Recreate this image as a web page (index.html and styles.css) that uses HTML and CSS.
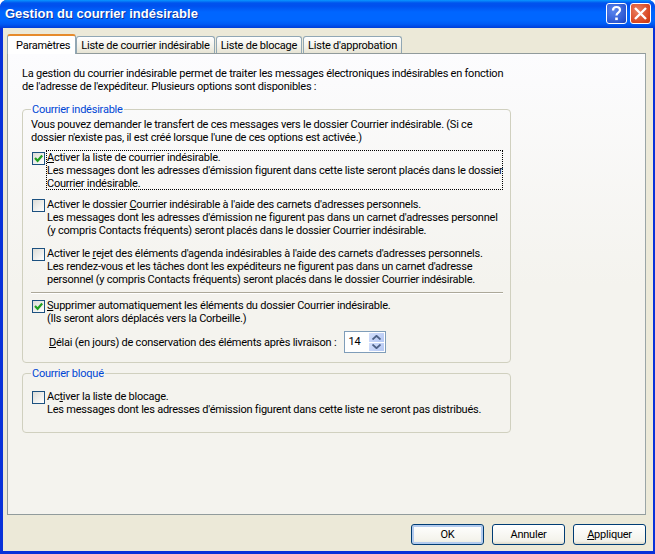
FILE: index.html
```html
<!DOCTYPE html>
<html lang="fr">
<head>
<meta charset="utf-8">
<title>Gestion du courrier indésirable</title>
<link rel="stylesheet" href="styles.css">
</head>
<body>
<div class="window">
  <header class="titlebar">
    <h1 class="title">Gestion du courrier indésirable</h1>
    <div class="caption-buttons">
      <button class="cap cap-help" aria-label="Aide">
        <svg width="21" height="21" viewBox="0 0 21 21"><path d="M7 7.5C7 5 8.5 4 10.5 4S14 5.2 14 7c0 2.6-3.5 2.6-3.5 5.5" fill="none" stroke="#fff" stroke-width="2.2"/><rect x="9.2" y="14.5" width="2.6" height="2.6" fill="#fff"/></svg>
      </button>
      <button class="cap cap-close" aria-label="Fermer">
        <svg width="21" height="21" viewBox="0 0 21 21"><path d="M5 5l11 11M16 5L5 16" fill="none" stroke="#fff" stroke-width="2.4"/></svg>
      </button>
    </div>
  </header>
  <div class="dialog">
    <nav class="tabs">
      <div class="tab tab-active">Paramètres</div>
      <div class="tab">Liste de courrier indésirable</div>
      <div class="tab">Liste de blocage</div>
      <div class="tab">Liste d'approbation</div>
    </nav>
    <main class="panel">
      <p class="intro">La gestion du courrier indésirable permet de traiter les messages électroniques indésirables en fonction<br>de l'adresse de l'expéditeur. Plusieurs options sont disponibles :</p>

      <fieldset class="group group-junk">
        <legend>Courrier indésirable</legend>
        <p class="lead">Vous pouvez demander le transfert de ces messages vers le dossier Courrier indésirable. (Si ce<br>dossier n'existe pas, il est créé lorsque l'une de ces options est activée.)</p>

        <div class="option option-focus">
          <span class="check"><svg width="13" height="13" viewBox="0 0 13 13"><path d="M3 6l2.6 2.8L10.2 3.6" fill="none" stroke="#21a121" stroke-width="2.2"/></svg></span>
          <div class="option-text"><u>A</u>ctiver la liste de courrier indésirable.<br>Les messages dont les adresses d'émission figurent dans cette liste seront placés dans le dossier<br>Courrier indésirable.</div>
        </div>

        <div class="option option-second">
          <span class="check"></span>
          <div class="option-text">Activer le dossier <u>C</u>ourrier indésirable à l'aide des carnets d'adresses personnels.<br>Les messages dont les adresses d'émission ne figurent pas dans un carnet d'adresses personnel<br>(y compris Contacts fréquents) seront placés dans le dossier Courrier indésirable.</div>
        </div>

        <div class="option option-third">
          <span class="check"></span>
          <div class="option-text">Activer le <u>r</u>ejet des éléments d'agenda indésirables à l'aide des carnets d'adresses personnels.<br>Les rendez-vous et les tâches dont les expéditeurs ne figurent pas dans un carnet d'adresse<br>personnel (y compris Contacts fréquents) seront placés dans le dossier Courrier indésirable.</div>
        </div>

        <hr class="rule">

        <div class="option option-purge">
          <span class="check"><svg width="13" height="13" viewBox="0 0 13 13"><path d="M3 6l2.6 2.8L10.2 3.6" fill="none" stroke="#21a121" stroke-width="2.2"/></svg></span>
          <div class="option-text"><u>S</u>upprimer automatiquement les éléments du dossier Courrier indésirable.<br>(Ils seront alors déplacés vers la Corbeille.)</div>
        </div>

        <div class="delay">
          <span><u>D</u>élai (en jours) de conservation des éléments après livraison :</span>
          <div class="spin">
            <span class="spin-value">14</span>
            <div class="spin-btns">
              <span class="spin-btn"><svg width="9" height="5" viewBox="0 0 9 5"><path d="M0.5 4.5L4.5 .8l4 3.7" fill="none" stroke="#4d6185" stroke-width="1.8"/></svg></span>
              <span class="spin-btn"><svg width="9" height="5" viewBox="0 0 9 5"><path d="M0.5 .5l4 3.7 4-3.7" fill="none" stroke="#4d6185" stroke-width="1.8"/></svg></span>
            </div>
          </div>
        </div>
      </fieldset>

      <fieldset class="group group-block">
        <legend>Courrier bloqué</legend>
        <div class="option">
          <span class="check"></span>
          <div class="option-text">Ac<u>t</u>iver la liste de blocage.<br>Les messages dont les adresses d'émission figurent dans cette liste ne seront pas distribués.</div>
        </div>
      </fieldset>
    </main>
    <footer class="actions">
      <button class="btn btn-default">OK</button>
      <button class="btn">Annuler</button>
      <button class="btn"><u>A</u>ppliquer</button>
    </footer>
  </div>
</div>
</body>
</html>
```

FILE: styles.css
```css
* { box-sizing: border-box; }
html, body { margin: 0; padding: 0; }
body {
  width: 655px;
  height: 554px;
  overflow: hidden;
  font-family: Roboto, "Liberation Sans", Arial, sans-serif;
  font-size: 11px;
  letter-spacing: -0.23px;
  line-height: 13px;
  color: #000;
}
u { text-underline-offset: 1px; }
.window {
  width: 655px;
  height: 554px;
  display: flex;
  flex-direction: column;
  background: #0453e3;
  border-left: 3px solid #0831d9;
  border-right: 2px solid #0831d9;
  border-bottom: 3px solid #0831d9;
  border-radius: 7px 7px 0 0;
}
.titlebar {
  height: 28px;
  flex: none;
  display: flex;
  align-items: flex-start;
  justify-content: space-between;
  margin: 0 -2px 0 -3px;
  padding: 3px 4px 0 5px;
  border-radius: 7px 7px 0 0;
  background: linear-gradient(#0997ff 0, #0053ee 3px, #0050ee 6px, #0066ff 12px, #0066ff 20px, #005bf5 24px, #003dd7 28px);
}
.title {
  margin: 3px 0 0;
  font-family: "Liberation Sans", Arial, sans-serif;
  font-size: 13px;
  letter-spacing: 0;
  line-height: 16px;
  font-weight: bold;
  color: #fff;
  text-shadow: 1px 1px 0 #0f2f9a;
}
.caption-buttons { display: flex; gap: 3px; }
.cap {
  width: 21px;
  height: 21px;
  padding: 0;
  border: 1px solid #fff;
  border-radius: 3px;
  display: block;
}
.cap svg { display: block; margin: -1px; }
.cap-help { background: radial-gradient(circle at 35% 35%, #5b86ee, #2a55cf 75%, #1c3fb0); }
.cap-close { background: radial-gradient(circle at 35% 35%, #ea8263, #d8451f 70%, #c2360f); }
.dialog {
  flex: 1;
  min-height: 0;
  display: flex;
  flex-direction: column;
  background: #ece9d8;
  padding: 7px 7px 0 4px;
}
.tabs {
  display: flex;
  height: 18px;
  position: relative;
  z-index: 1;
  flex: none;
  align-items: flex-end;
}
.tab {
  height: 17px;
  padding: 2px 4px 0;
  margin-right: 1px;
  background: linear-gradient(#fff, #f2f1e9 60%, #e7e4d4);
  border: 1px solid #91a7b4;
  border-bottom: none;
  border-radius: 3px 3px 0 0;
  white-space: nowrap;
}
.tab-active {
  height: 20px;
  margin-bottom: -1px;
  margin-right: 0;
  padding: 3px 5px 0 8px;
  background: #fff;
  border-top: 2px solid #e68b2c;
  border-color: #e68b2c #91a7b4 #fff;
}
.panel {
  flex: none;
  height: 462px;
  border: 1px solid #919b9c;
  border-right-color: #9aa5a6;
  background: linear-gradient(#fcfcfe 0, #f4f3ee 230px, #f4f3ee 100%);
  padding: 13px 0 0 14px;
}
.intro { margin: 0; }
.group {
  margin: 0;
  padding: 0 7px 0 8px;
  border: 1px solid #d0d0bf;
  border-radius: 4px;
  min-width: 0;
  width: 489px;
}
.group legend {
  padding: 0 1px;
  margin-left: 0;
  color: #0046d5;
  line-height: 13px;
}
.group-junk { margin-top: 10px; height: 260px; }
.group-block { margin-top: 4px; height: 66px; }
.group-block .option { margin-top: 10px; }
.lead { margin: 2px 0 0; }
.option {
  display: flex;
  gap: 1px;
  width: 472px;
}
.option-focus { margin-top: 6px; }
.option-focus .check { margin-top: 2px; }
.option-focus .option-text {
  flex: 1;
  padding-top: 1px;
  outline: 1px dotted #000;
  outline-offset: -1px;
  height: 40px;
}
.option-second { margin-top: 8px; }
.option-third { margin-top: 10px; }
.option-purge { margin-top: 6px; }
.check {
  flex: none;
  width: 13px;
  height: 13px;
  margin: 1px 0 0 1px;
  border: 1px solid #1c5180;
  background: linear-gradient(135deg, #dcdcd7, #fff);
}
.check svg { display: block; margin: -1px; }
.option-text { white-space: nowrap; padding-left: 1px; }
.rule {
  margin: 6px 0 6px 0;
  border: none;
  height: 1px;
  background: #aca899;
  box-shadow: 0 1px 0 #fff;
}
.delay {
  margin: 6px 0 0 18px;
  display: flex;
  align-items: center;
  gap: 8px;
  white-space: nowrap;
}
.spin {
  width: 42px;
  height: 22px;
  padding: 1px;
  border: 1px solid #7f9db9;
  background: #fff;
  display: flex;
  justify-content: space-between;
}
.spin-value { padding: 2px 0 0 2px; letter-spacing: 0; }
.spin-btns { width: 15px; display: flex; flex-direction: column; gap: 1px; }
.spin-btn {
  flex: 1;
  display: flex;
  align-items: center;
  justify-content: center;
  background: linear-gradient(135deg, #d3dffb, #b4c7f3);
}
.actions {
  display: flex;
  justify-content: flex-end;
  gap: 8px;
  padding: 9px 0 0 0;
}
.btn {
  width: 73px;
  height: 21px;
  padding: 0;
  border: 1px solid #003c74;
  border-radius: 3px;
  background: linear-gradient(#fff, #f3f2ea 85%, #dcd8c8);
  font: inherit;
  letter-spacing: inherit;
  color: #000;
}
.btn-default {
  box-shadow: inset 0 0 0 2px #b3cbee;
}
```
